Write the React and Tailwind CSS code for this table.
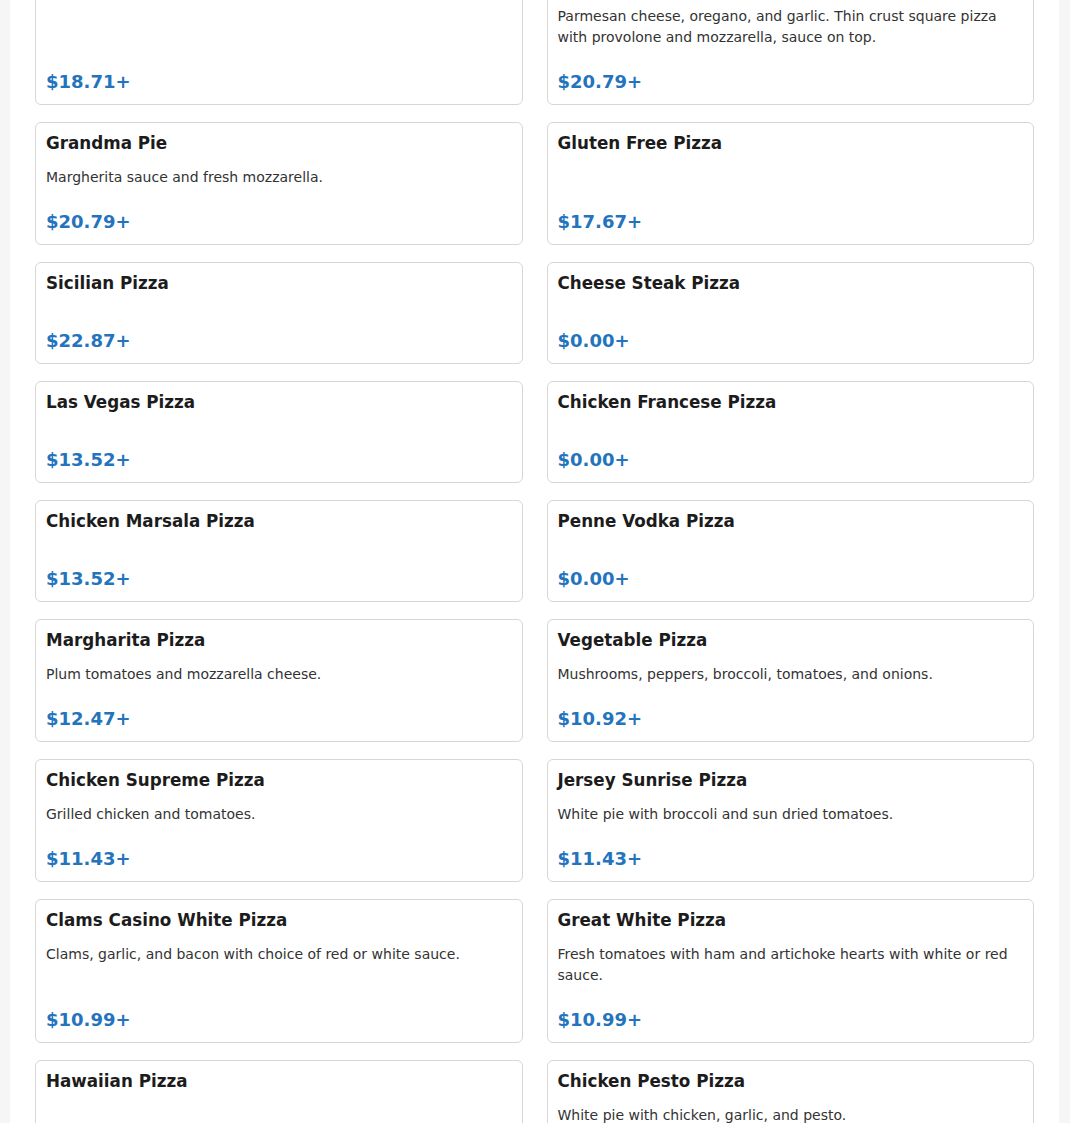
const pizzas = [
  { name: "Tomato Pie", desc: "", price: "$18.71+" },
  {
    name: "Old Forge Pizza",
    desc: "Parmesan cheese, oregano, and garlic. Thin crust square pizza with provolone and mozzarella, sauce on top.",
    price: "$20.79+",
  },
  { name: "Grandma Pie", desc: "Margherita sauce and fresh mozzarella.", price: "$20.79+" },
  { name: "Gluten Free Pizza", desc: "", price: "$17.67+" },
  { name: "Sicilian Pizza", desc: "", price: "$22.87+" },
  { name: "Cheese Steak Pizza", desc: "", price: "$0.00+" },
  { name: "Las Vegas Pizza", desc: "", price: "$13.52+" },
  { name: "Chicken Francese Pizza", desc: "", price: "$0.00+" },
  { name: "Chicken Marsala Pizza", desc: "", price: "$13.52+" },
  { name: "Penne Vodka Pizza", desc: "", price: "$0.00+" },
  { name: "Margharita Pizza", desc: "Plum tomatoes and mozzarella cheese.", price: "$12.47+" },
  {
    name: "Vegetable Pizza",
    desc: "Mushrooms, peppers, broccoli, tomatoes, and onions.",
    price: "$10.92+",
  },
  { name: "Chicken Supreme Pizza", desc: "Grilled chicken and tomatoes.", price: "$11.43+" },
  {
    name: "Jersey Sunrise Pizza",
    desc: "White pie with broccoli and sun dried tomatoes.",
    price: "$11.43+",
  },
  {
    name: "Clams Casino White Pizza",
    desc: "Clams, garlic, and bacon with choice of red or white sauce.",
    price: "$10.99+",
  },
  {
    name: "Great White Pizza",
    desc: "Fresh tomatoes with ham and artichoke hearts with white or red sauce.",
    price: "$10.99+",
  },
  { name: "Hawaiian Pizza", desc: "", price: "$13.52+" },
  { name: "Chicken Pesto Pizza", desc: "White pie with chicken, garlic, and pesto.", price: "$13.52+" },
];

function PizzaCard({ name, desc, price }) {
  return (
    <div className="flex flex-col rounded-md border border-[#d6d6d6] bg-white p-[10px]">
      <h3 className="text-[16.75px] font-bold leading-[20px] text-[#1c1c1c]">{name}</h3>
      <p className="mt-[14px] mb-[22px] flex-1 text-[14px] leading-[21px] text-[#333]">{desc}</p>
      <p className="text-[18px] font-bold leading-[24px] text-[#2474bd]">{price}</p>
    </div>
  );
}

export default function App() {
  return (
    <div
      className="h-screen overflow-hidden bg-[#f6f6f6] pl-[10px] pr-[11px]"
      style={{ fontFamily: '"DejaVu Sans", Verdana, sans-serif' }}
    >
      <div className="flow-root h-full bg-white px-[25px]">
        <div className="-mt-[39.5px] grid grid-cols-2 gap-x-[24px] gap-y-[17px]">
          {pizzas.map((p) => (
            <PizzaCard key={p.name} {...p} />
          ))}
        </div>
      </div>
    </div>
  );
}
